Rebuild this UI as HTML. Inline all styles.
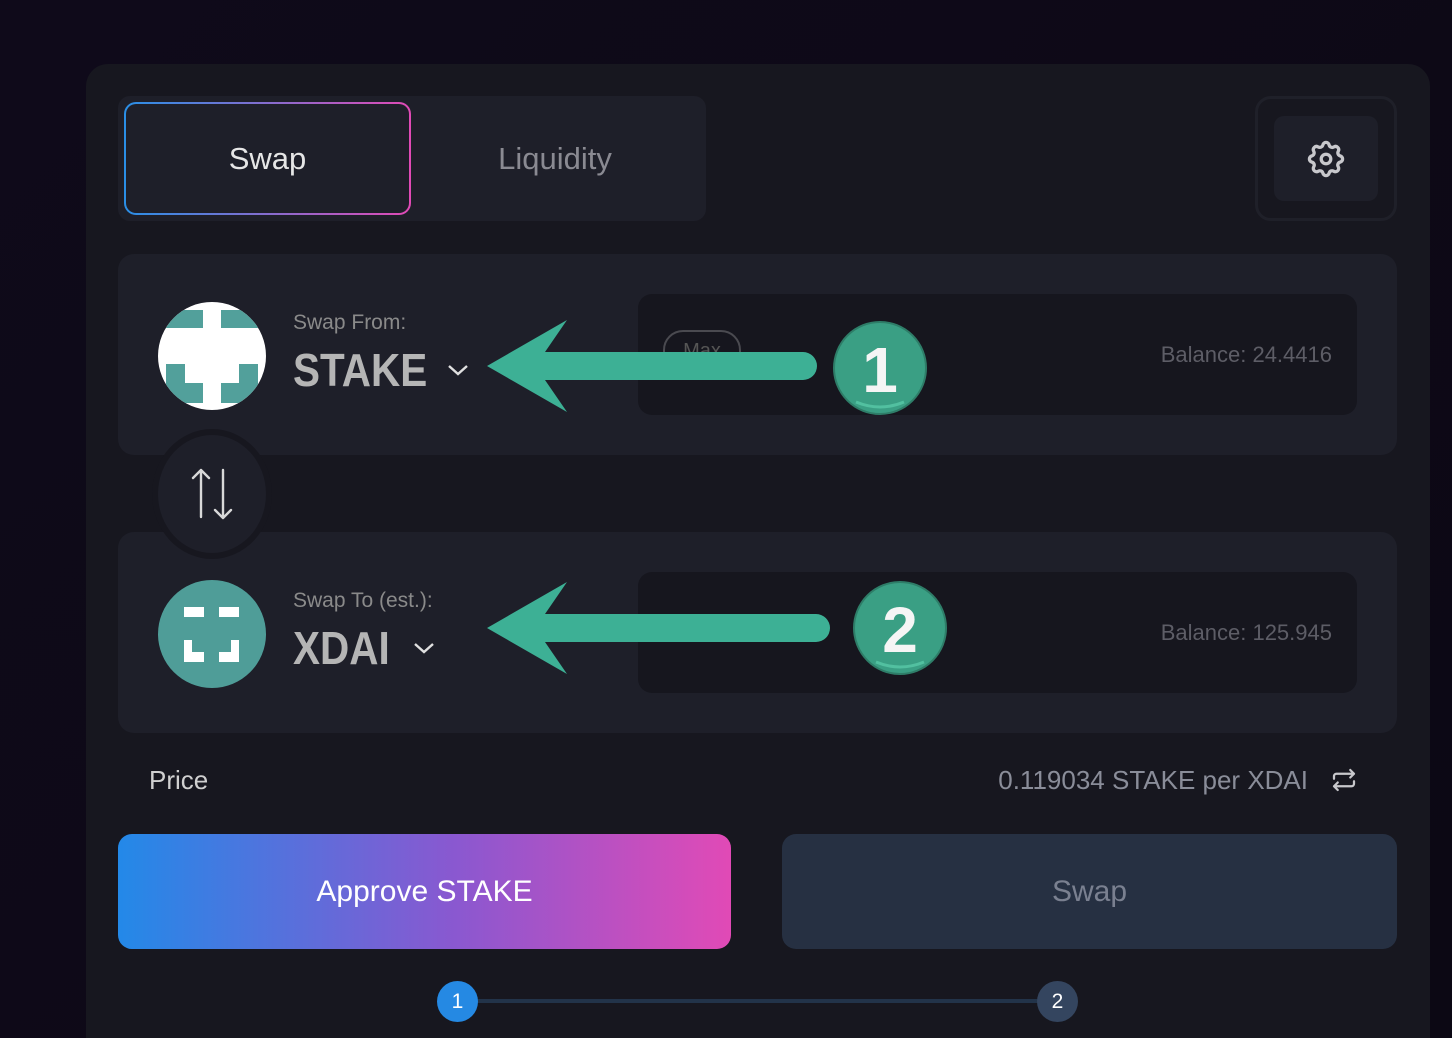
<!DOCTYPE html>
<html><head><meta charset="utf-8"><style>
*{margin:0;padding:0;box-sizing:border-box}
html,body{width:1452px;height:1038px;overflow:hidden}
body{background:linear-gradient(135deg,#0f0a1a,#0c0814);font-family:"Liberation Sans",sans-serif;position:relative}
.abs{position:absolute}
.card{left:86px;top:64px;width:1344px;height:974px;background:#17171f;border-radius:22px 22px 0 0}
.tabs{left:118px;top:96px;width:588px;height:125px;background:#1e1f29;border-radius:12px}
.tab{left:124px;top:102px;width:287px;height:113px;border-radius:12px;border:2px solid transparent;background:linear-gradient(#1e1f29,#1e1f29) padding-box,linear-gradient(90deg,#2a8fe6,#e14ab6) border-box;color:#e6e6e6;font-size:31px;display:flex;align-items:center;justify-content:center}
.liq{left:411px;top:102px;width:288px;height:113px;display:flex;align-items:center;justify-content:center;color:#8a8a92;font-size:31px}
.set{left:1255px;top:96px;width:142px;height:125px;border:3px solid #1f2029;border-radius:16px}
.seti{left:1274px;top:116px;width:104px;height:85px;background:#1e1f29;border-radius:10px}
.panel{left:118px;width:1279px;height:201px;background:#1e1f29;border-radius:16px}
.inp{left:638px;width:719px;height:121px;background:#16161e;border-radius:14px}
.bal{right:120px;color:#5d5d66;font-size:22px}
.lbl{left:293px;color:#8a8a8a;font-size:21px}
.tok{left:293px;color:#b5b5b5;font-size:46px;font-weight:bold;transform:scaleX(0.88);transform-origin:left center}
.btn{top:834px;height:115px;border-radius:14px;display:flex;align-items:center;justify-content:center;font-size:30px}
</style></head><body>
<div class="abs card"></div>
<div class="abs tabs"></div>
<div class="abs tab">Swap</div>
<div class="abs liq">Liquidity</div>
<div class="abs set"></div>
<div class="abs seti"></div>
<svg class="abs" style="left:1304px;top:137px" width="44" height="44" viewBox="0 0 24 24" fill="none" stroke="#c8c8cc" stroke-width="1.8" stroke-linecap="round" stroke-linejoin="round"><path d="M10.3 4.3c.4-1.8 3-1.8 3.4 0a1.7 1.7 0 0 0 2.6 1.1c1.5-.9 3.3.8 2.4 2.4a1.7 1.7 0 0 0 1 2.5c1.8.4 1.8 3 0 3.4a1.7 1.7 0 0 0-1 2.6c.9 1.5-.9 3.3-2.4 2.4a1.7 1.7 0 0 0-2.6 1c-.4 1.8-3 1.8-3.4 0a1.7 1.7 0 0 0-2.6-1c-1.5.9-3.3-.9-2.4-2.4a1.7 1.7 0 0 0-1-2.6c-1.8-.4-1.8-3 0-3.4a1.7 1.7 0 0 0 1-2.5c-.9-1.6.9-3.3 2.4-2.4 1 .6 2.3.1 2.6-1.1z"/><circle cx="12" cy="12" r="2.6"/></svg>

<div class="abs panel" style="top:254px"></div>
<div class="abs inp" style="top:294px"></div>
<div class="abs" style="left:663px;top:330px;width:78px;height:42px;border:2px solid #4a4a50;border-radius:20px;color:#555;font-size:20px;text-align:center;line-height:38px">Max</div>
<div class="abs bal" style="top:342px">Balance: 24.4416</div>
<svg class="abs" style="left:158px;top:302px" width="108" height="108" viewBox="158 302 108 108"><defs><clipPath id="c1"><circle cx="212" cy="356" r="54"/></clipPath></defs><circle cx="212" cy="356" r="54" fill="#fff"/><g clip-path="url(#c1)" fill="#52a09b"><rect x="158" y="310" width="45" height="18"/><rect x="221" y="310" width="45" height="18"/><path d="M166 364h19v19h18v20h-37z"/><path d="M258 364h-19v19h-18v20h37z"/></g></svg>
<div class="abs lbl" style="top:311px">Swap From:</div>
<div class="abs tok" style="top:343px">STAKE</div>
<svg class="abs" style="left:446px;top:362px" width="24" height="16" viewBox="0 0 24 16"><path d="M3 4l9 8 9-8" fill="none" stroke="#e0e0e0" stroke-width="2.4"/></svg>

<div class="abs panel" style="top:532px"></div>
<div class="abs inp" style="top:572px"></div>
<div class="abs bal" style="top:620px">Balance: 125.945</div>
<div class="abs" style="left:152px;top:429px;width:120px;height:130px;border-radius:50%;background:#1e1f29;border:6px solid #17171f;z-index:2"></div>
<svg class="abs" style="left:184px;top:465px;z-index:3" width="56" height="60" viewBox="0 0 56 60"><g fill="none" stroke="#d8d8d8" stroke-width="2.4" stroke-linecap="round" stroke-linejoin="round"><path d="M17 52V5M9 13l8-8 8 8"/><path d="M39 5v48M31 45l8 8 8-8"/></g></svg>
<svg class="abs" style="left:158px;top:580px" width="108" height="108" viewBox="158 580 108 108"><circle cx="212" cy="634" r="54" fill="#4f9d98"/><g fill="#fff"><rect x="184" y="607" width="20" height="10"/><rect x="219" y="607" width="20" height="10"/><path d="M184 640h8v12h12v10h-20z"/><path d="M239 640h-8v12h-12v10h20z"/></g></svg>
<div class="abs lbl" style="top:589px">Swap To (est.):</div>
<div class="abs tok" style="top:621px">XDAI</div>
<svg class="abs" style="left:412px;top:640px" width="24" height="16" viewBox="0 0 24 16"><path d="M3 4l9 8 9-8" fill="none" stroke="#e0e0e0" stroke-width="2.4"/></svg>

<svg class="abs" style="left:0;top:0;z-index:4" width="1452" height="1038">
<path d="M487 366L567 320L545 352H803a14 14 0 0 1 0 28H545L567 412Z" fill="#3db095"/>
<circle cx="880" cy="368" r="46" fill="#3a9f84" stroke="#2e7d68" stroke-width="2"/>
<path d="M856 402q24 10 48 0" stroke="#52c0a0" stroke-width="3" fill="none"/>
<text x="880" y="392" font-family="Liberation Sans" font-weight="bold" font-size="64" fill="#f5f5f5" text-anchor="middle">1</text>
<path d="M487 628L567 582L545 614H816a14 14 0 0 1 0 28H545L567 674Z" fill="#3db095"/>
<circle cx="900" cy="628" r="46" fill="#3a9f84" stroke="#2e7d68" stroke-width="2"/>
<path d="M876 662q24 10 48 0" stroke="#52c0a0" stroke-width="3" fill="none"/>
<text x="900" y="652" font-family="Liberation Sans" font-weight="bold" font-size="64" fill="#f5f5f5" text-anchor="middle">2</text>
</svg>

<div class="abs" style="left:149px;top:765px;color:#d0d0d0;font-size:26px">Price</div>
<div class="abs" style="right:144px;top:765px;color:#8a8d99;font-size:26px">0.119034 STAKE per XDAI</div>
<svg class="abs" style="left:1329px;top:765px" width="30" height="30" viewBox="0 0 24 24" fill="none" stroke="#c8c8cc" stroke-width="1.8" stroke-linecap="round" stroke-linejoin="round"><path d="M4 11V9a2 2 0 0 1 2-2h14M17 4l3 3-3 3"/><path d="M20 13v2a2 2 0 0 1-2 2H4M7 20l-3-3 3-3"/></svg>

<div class="abs btn" style="left:118px;width:613px;background:linear-gradient(90deg,#2389e8,#8a58d0 55%,#e14ab6);color:#fff">Approve STAKE</div>
<div class="abs btn" style="left:782px;width:615px;background:#263042;color:#7a8090">Swap</div>

<div class="abs" style="left:470px;top:999px;width:580px;height:4px;background:#223349"></div>
<div class="abs" style="left:437px;top:981px;width:41px;height:41px;border-radius:50%;background:#2589e3;color:#fff;font-size:21px;text-align:center;line-height:41px">1</div>
<div class="abs" style="left:1037px;top:981px;width:41px;height:41px;border-radius:50%;background:#34455f;color:#fff;font-size:21px;text-align:center;line-height:41px">2</div>
</body></html>
